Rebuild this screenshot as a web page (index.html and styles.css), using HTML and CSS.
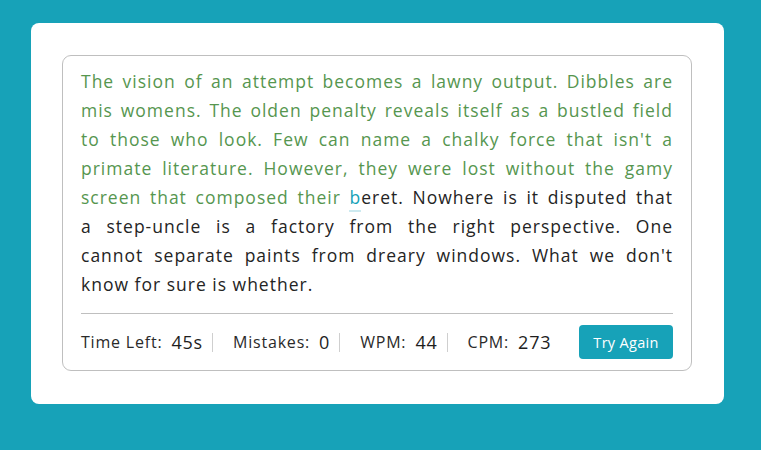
FILE: index.html
```html
<!DOCTYPE html>
<html lang="en">
<head>
<meta charset="utf-8">
<title>Typing Test</title>
<link rel="stylesheet" href="styles.css">
</head>
<body>
<div class="wrapper">
  <div class="content-box">
    <p class="typing-text">
      <span class="line correct">The vision of an attempt becomes a lawny output. Dibbles are</span>
      <span class="line correct">mis womens. The olden penalty reveals itself as a bustled field</span>
      <span class="line correct">to those who look. Few can name a chalky force that isn't a</span>
      <span class="line correct">primate literature. However, they were lost without the gamy</span>
      <span class="line"><span class="correct">screen that composed their </span><span class="active">b</span>eret. Nowhere is it disputed that</span>
      <span class="line">a step-uncle is a factory from the right perspective. One</span>
      <span class="line">cannot separate paints from dreary windows. What we don't</span>
      <span class="line last">know for sure is whether.</span>
    </p>
    <div class="content">
      <ul class="result-details">
        <li class="stat"><span class="label">Time Left:</span><b class="value">45s</b></li>
        <li class="stat"><span class="label">Mistakes:</span><b class="value">0</b></li>
        <li class="stat"><span class="label">WPM:</span><b class="value">44</b></li>
        <li class="stat final"><span class="label">CPM:</span><b class="value">273</b></li>
      </ul>
      <button class="btn">Try Again</button>
    </div>
  </div>
</div>
</body>
</html>
```
FILE: styles.css
```css
* { box-sizing: border-box; }
body {
  margin: 0;
  min-height: 450px;
  background: #17a2b8;
  font-family: "Open Sans", "DejaVu Sans", sans-serif;
  padding: 23px 37px 0 31px;
}
.wrapper {
  background: #fff;
  border-radius: 8px;
  padding: 32px 32px 33px 31px;
}
.content-box {
  border: 1px solid #bfbfbf;
  border-radius: 9px;
  padding: 11px 18px 0 18px;
}
.typing-text {
  margin: 0;
  font-size: 17.5px;
  line-height: 29px;
  letter-spacing: 1px;
  color: #242424;
}
.line {
  display: block;
  text-align: justify;
  text-align-last: justify;
}
.line.last { text-align-last: left; }
.correct { color: #56964f; }
.active {
  color: #17a2b8;
  position: relative;
}
.active::before {
  content: "";
  position: absolute;
  left: 0;
  bottom: -3px;
  height: 2px;
  width: 100%;
  background: #cdeaf0;
}
.content {
  margin-top: 14px;
  border-top: 1px solid #bfbfbf;
  display: flex;
  align-items: center;
  justify-content: space-between;
  padding: 11px 0 11px;
}
.result-details {
  list-style: none;
  margin: 0;
  padding: 0;
  display: flex;
  align-items: center;
}
.stat {
  display: flex;
  align-items: center;
  height: 19px;
  padding: 0 9px 0 20px;
  border-right: 1px solid #cfcfcf;
}
.stat:first-child { padding-left: 0; }
.stat.final { border-right: none; }
.label {
  font-size: 16px;
  letter-spacing: 0.8px;
  color: #2a2a2a;
}
.value {
  font-size: 18px;
  font-weight: 500;
  letter-spacing: 0.8px;
  color: #1e1e1e;
  margin-left: 9px;
}
.btn {
  border: none;
  outline: none;
  width: 94px;
  height: 34px;
  border-radius: 4px;
  background: #17a2b8;
  color: #fff;
  font-family: inherit;
  font-size: 14.5px;
  letter-spacing: 0.3px;
  cursor: pointer;
}
```
